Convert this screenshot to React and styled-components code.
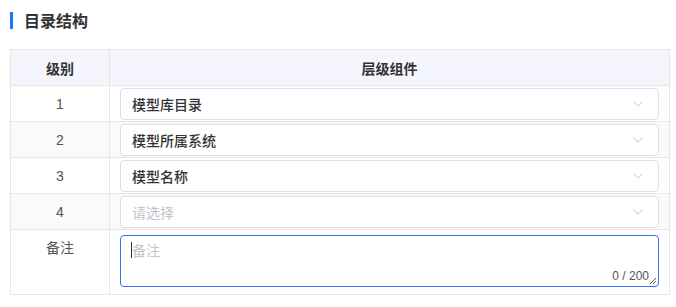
import React from "react";
import styled, { createGlobalStyle } from "styled-components";

const Global = createGlobalStyle`
  html, body { margin: 0; padding: 0; background: #fff; }
  body { font-family: "Liberation Sans", "Noto Sans CJK SC", sans-serif; color: #333; }
  * { box-sizing: border-box; }
`;

const Page = styled.div`
  padding: 10px 7px 0 10px;
  width: 676px;
`;

const Title = styled.div`
  display: flex;
  align-items: center;
  gap: 11px;
  height: 20px;
  margin-bottom: 19px;
  font-size: 16px;
  font-weight: 700;
  color: #333;
  &::before {
    content: "";
    width: 3px;
    height: 17px;
    background: #1677ff;
  }
`;

const Table = styled.div`
  display: grid;
  grid-template-columns: 99px 1fr;
  border-top: 1px solid #e6e6e6;
  border-left: 1px solid #e6e6e6;
  width: 660px;
`;

const Cell = styled.div`
  border-right: 1px solid #e6e6e6;
  border-bottom: 1px solid #e6e6e6;
  background: ${(p) => (p.$head ? "#f4f5fd" : p.$alt ? "#fafafa" : "#fff")};
  min-height: ${(p) => (p.$tall ? "65px" : "36px")};
  display: flex;
  align-items: ${(p) => (p.$top ? "flex-start" : "center")};
  justify-content: ${(p) => (p.$center ? "center" : "flex-start")};
  padding: ${(p) => (p.$pad ? p.$pad : "0")};
  font-size: 14px;
  font-weight: ${(p) => (p.$head ? 700 : 400)};
  color: ${(p) => (p.$head ? "#333" : "#555")};
`;

const Select = styled.div`
  flex: 1;
  height: 32px;
  border: 1px solid #dcdfe6;
  border-radius: 4px;
  background: #fff;
  display: flex;
  align-items: center;
  justify-content: space-between;
  padding: 0 14px 0 11px;
  font-size: 14px;
  font-weight: ${(p) => (p.$placeholder ? 400 : 500)};
  color: ${(p) => (p.$placeholder ? "#c0c4cc" : "#333")};
`;

const Area = styled.div`
  position: relative;
  flex: 1;
  height: 52px;
  border: 1px solid #2f74f6;
  border-radius: 4px;
  background: #fff;
  padding: 4px 10px;
  font-size: 14px;
  color: #c0c4cc;
  display: flex;
  align-items: flex-start;
`;

const Caret = styled.span`
  display: inline-block;
  width: 1px;
  height: 16px;
  margin-top: 2px;
  background: #333;
`;

const Count = styled.span`
  position: absolute;
  right: 9px;
  bottom: 3px;
  font-size: 12px;
  color: #555;
`;

const Grip = styled.svg`
  position: absolute;
  right: 1px;
  bottom: 1px;
`;

const Chevron = () => (
  <svg width="12" height="8" viewBox="0 0 12 8">
    <path d="M1 1.5 L6 6 L11 1.5" fill="none" stroke="#c8c9cc" strokeWidth="1" />
  </svg>
);

const rows = [
  { n: "1", v: "模型库目录" },
  { n: "2", v: "模型所属系统" },
  { n: "3", v: "模型名称" },
  { n: "4", v: "请选择", ph: true },
];

export default function App() {
  return (
    <>
      <Global />
      <Page>
        <Title>目录结构</Title>
        <Table>
          <Cell $head $center>级别</Cell>
          <Cell $head $center>层级组件</Cell>
          {rows.map((r, i) => (
            <React.Fragment key={r.n}>
              <Cell $center $alt={i % 2 === 1}>{r.n}</Cell>
              <Cell $alt={i % 2 === 1} $pad="0 10px 0 10px">
                <Select $placeholder={r.ph}>
                  <span>{r.v}</span>
                  <Chevron />
                </Select>
              </Cell>
            </React.Fragment>
          ))}
          <Cell $center $top $tall $pad="7px 0 0 0">备注</Cell>
          <Cell $tall $pad="4px 10px 7px 10px">
            <Area>
              <Caret />
              <span>备注</span>
              <Count>0 / 200</Count>
              <Grip width="8" height="8" viewBox="0 0 8 8">
                <path d="M7 1 L1 7 M7 4 L4 7" stroke="#555" strokeWidth="1" />
              </Grip>
            </Area>
          </Cell>
        </Table>
      </Page>
    </>
  );
}
